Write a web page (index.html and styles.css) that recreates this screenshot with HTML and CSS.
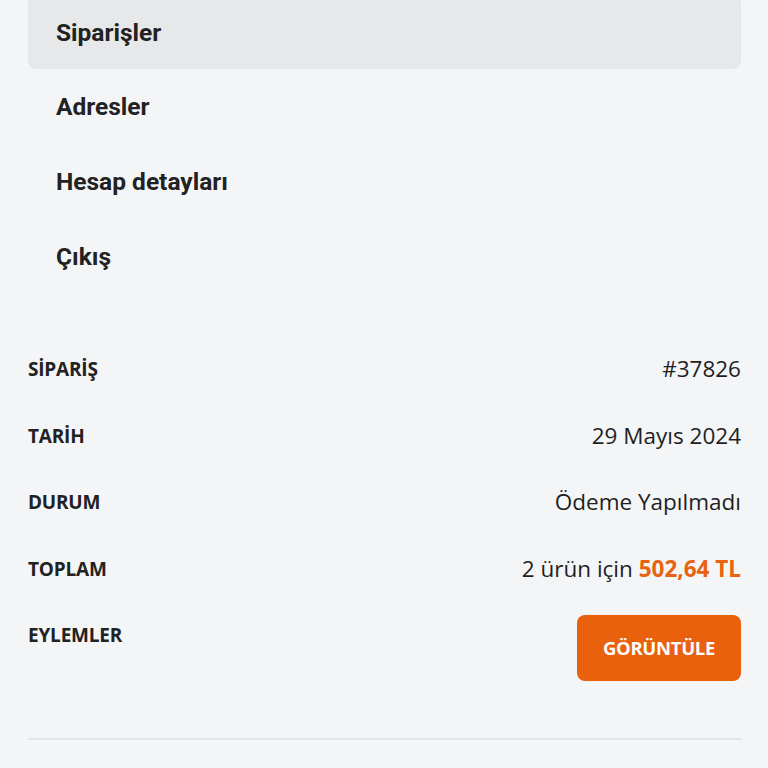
FILE: index.html
```html
<!DOCTYPE html>
<html lang="tr">
<head>
<meta charset="utf-8">
<title>Siparişler</title>
<link rel="stylesheet" href="styles.css">
</head>
<body>
<div class="page">
  <nav class="account-nav">
    <a class="nav-item active" href="#">Siparişler</a>
    <a class="nav-item" href="#">Adresler</a>
    <a class="nav-item" href="#">Hesap detayları</a>
    <a class="nav-item" href="#">Çıkış</a>
  </nav>

  <div class="order">
    <div class="row">
      <div class="label">SİPARİŞ</div>
      <div class="value">#37826</div>
    </div>
    <div class="row">
      <div class="label">TARİH</div>
      <div class="value">29 Mayıs 2024</div>
    </div>
    <div class="row">
      <div class="label">DURUM</div>
      <div class="value">Ödeme Yapılmadı</div>
    </div>
    <div class="row">
      <div class="label">TOPLAM</div>
      <div class="value">2 ürün için <span class="price">502,64 TL</span></div>
    </div>
    <div class="row actions">
      <div class="label">EYLEMLER</div>
      <div class="value"><a class="btn" href="#">GÖRÜNTÜLE</a></div>
    </div>
  </div>
  <hr class="divider">
</div>
</body>
</html>
```

FILE: styles.css
```css
html, body {
  margin: 0;
  padding: 0;
  background: #f4f5f7;
}
body {
  font-family: "Open Sans", "Noto Sans", sans-serif;
  color: #1f1f1f;
}
.page {
  padding: 0 27px 0 28px;
}
.account-nav {
  display: flex;
  flex-direction: column;
  margin-top: -5px;
}
.nav-item {
  display: flex;
  align-items: center;
  height: 75px;
  padding-left: 28px;
  font-family: Roboto, "Open Sans", sans-serif;
  font-size: 24.5px;
  font-weight: 700;
  color: #222;
  text-decoration: none;
  border-radius: 8px;
}
.nav-item.active {
  background: #e7e8e9;
  height: 74px;
}
.order {
  margin-top: 42px;
}
.row {
  display: flex;
  justify-content: space-between;
  align-items: flex-start;
  padding: 21px 0;
  line-height: 24px;
  min-height: 24.5px;
}
.label {
  font-size: 19px;
  font-weight: 700;
  letter-spacing: -0.2px;
  color: #222;
}
.value {
  font-size: 22.5px;
  text-align: right;
}
.value.num {
  letter-spacing: -0.5px;
}
.price {
  color: #e8620f;
  font-weight: 700;
}
.row.actions .value {
  margin-top: -8px;
}
.btn {
  display: flex;
  align-items: center;
  justify-content: center;
  width: 164px;
  height: 66px;
  background: #e9600d;
  color: #fff;
  border-radius: 8px;
  font-size: 18.5px;
  font-weight: 700;
  text-decoration: none;
  letter-spacing: -0.3px;
}
.divider {
  border: none;
  height: 2px;
  background: #e3e4e6;
  margin: 36px 0 0;
}
```
